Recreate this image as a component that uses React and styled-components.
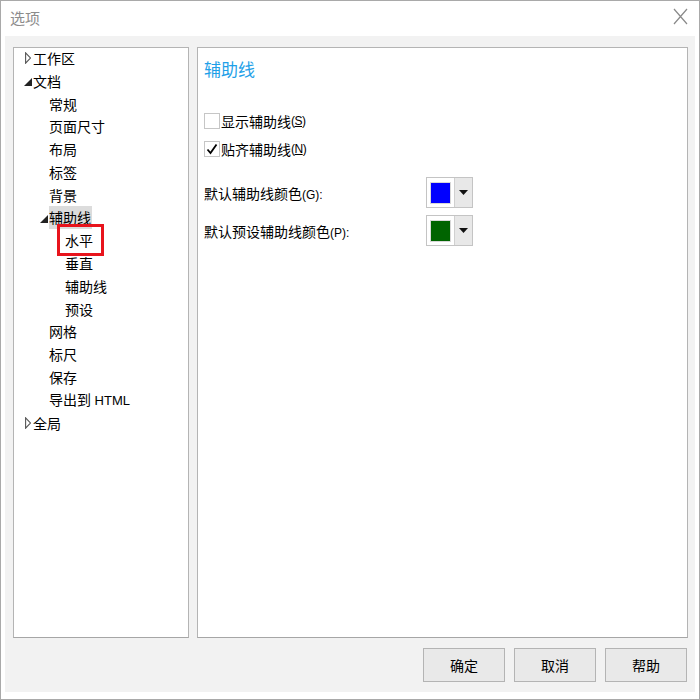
import React from 'react';
import styled, { createGlobalStyle } from 'styled-components';

const Global = createGlobalStyle`
  html, body {
    margin: 0;
    padding: 0;
    background: #ffffff;
  }
  body {
    font-family: "Liberation Sans", "Noto Sans CJK SC", sans-serif;
    color: #000;
  }
`;

const Window = styled.div`
  width: 700px;
  height: 700px;
  box-sizing: border-box;
  border: 1px solid #a9a9a9;
  background: #ffffff;
  display: flex;
  flex-direction: column;
`;
const TitleBar = styled.div`
  height: 35px;
  flex: none;
  display: flex;
  align-items: center;
  justify-content: space-between;
  padding: 0 11px 0 9px;
`;
const Title = styled.span`
  font-family: "Noto Sans CJK SC", sans-serif;
  font-size: 15px;
  color: #8c8c8c;
  margin-top: -2px;
`;
const Close = styled.svg`
  width: 15px;
  height: 17px;
  margin-top: -4px;
`;
const Body = styled.div`
  flex: 1;
  margin: 0 4px 7px;
  background: #f2f2f2;
  padding: 11px 7px 10px 8px;
  display: flex;
  flex-direction: column;
`;
const Panels = styled.div`
  flex: 1;
  display: flex;
  gap: 8px;
`;
const Panel = styled.div`
  box-sizing: border-box;
  background: #ffffff;
  border: 1px solid #b4b4b4;
  border-bottom-color: #a6a6a6;
  flex: ${(p) => (p.$width ? 'none' : '1')};
  width: ${(p) => (p.$width ? `${p.$width}px` : 'auto')};
`;
const Tree = styled.div`
  margin-top: -1px;
  font-family: "Noto Sans CJK SC", sans-serif;
  font-size: 14px;
`;
const TreeRow = styled.div`
  height: 22.8px;
  display: flex;
  align-items: center;
  padding-left: ${(p) => 5 + p.$level * 16}px;
`;
const Toggle = styled.span`
  width: 14px;
  height: 100%;
  flex: none;
  display: flex;
  align-items: center;
  padding-left: ${(p) => (p.$open ? 5 : 6)}px;
  box-sizing: border-box;
`;
const Label = styled.span`
  position: relative;
  line-height: 23px;
  padding-right: 1px;
  background: ${(p) => (p.$selected ? '#dcdcdc' : 'transparent')};
  white-space: nowrap;
  &::after {
    content: '';
    display: ${(p) => (p.$marked ? 'block' : 'none')};
    position: absolute;
    left: -8px;
    right: -10px;
    top: -5px;
    bottom: -4px;
    border: 3px solid #e8141c;
  }
`;
const Latin = styled.span`
  font-family: "Liberation Sans", sans-serif;
  font-size: ${(p) => p.$size || 13}px;
`;
const Content = styled.div`
  padding: 9px 0 0 6px;
  font-family: "Noto Sans CJK SC", sans-serif;
  font-size: 14px;
`;
const Heading = styled.div`
  color: #1e9fe8;
  font-size: 17px;
  line-height: 24px;
  margin-bottom: 30px;
`;
const CheckRow = styled.div`
  height: 20px;
  display: flex;
  align-items: center;
  margin-bottom: 8px;
`;
const Box = styled.span`
  width: 16px;
  height: 16px;
  box-sizing: border-box;
  border: 1px solid #c6c6c6;
  background: #fff;
  margin-right: 1px;
  display: flex;
  align-items: center;
  justify-content: center;
`;
const Key = styled.span`
  font-family: "Liberation Sans", sans-serif;
  font-size: 12px;
  letter-spacing: -0.5px;
  & u {
    text-decoration: underline;
  }
`;
const ColorGrid = styled.div`
  margin-top: 18px;
  display: grid;
  grid-template-columns: 222px auto;
  row-gap: 7px;
  align-items: center;
`;
const Combo = styled.div`
  width: 47px;
  height: 31px;
  box-sizing: border-box;
  border: 1px solid #c4c4c4;
  display: flex;
  background: #fff;
`;
const Swatch = styled.span`
  width: 21px;
  height: 22px;
  margin: 4px 3px 3px 3px;
  box-sizing: border-box;
  border: 1px solid #d8d8d8;
  background: ${(p) => p.$color};
`;
const Drop = styled.span`
  flex: 1;
  background: #e8e8e8;
  border-left: 1px solid #d0d0d0;
  display: flex;
  align-items: center;
  justify-content: center;
`;
const Footer = styled.div`
  margin-top: 10px;
  display: flex;
  justify-content: flex-end;
  gap: 9px;
  padding-right: 1px;
`;
const Button = styled.button`
  width: 82px;
  height: 34px;
  box-sizing: border-box;
  border: 1px solid #b4b4b4;
  background: #e9e9e9;
  font-family: "Noto Sans CJK SC", sans-serif;
  font-size: 14px;
  color: #000;
  padding: 0;
`;

const tree = [
  { label: '工作区', level: 0, toggle: 'closed' },
  { label: '文档', level: 0, toggle: 'open' },
  { label: '常规', level: 1 },
  { label: '页面尺寸', level: 1 },
  { label: '布局', level: 1 },
  { label: '标签', level: 1 },
  { label: '背景', level: 1 },
  { label: '辅助线', level: 1, toggle: 'open', selected: true },
  { label: '水平', level: 2, marked: true },
  { label: '垂直', level: 2 },
  { label: '辅助线', level: 2 },
  { label: '预设', level: 2 },
  { label: '网格', level: 1 },
  { label: '标尺', level: 1 },
  { label: '保存', level: 1 },
  { label: '导出到', latin: ' HTML', level: 1 },
  { label: '全局', level: 0, toggle: 'closed' },
];

function Arrow({ type }) {
  if (type === 'open') {
    return (
      <svg width="8" height="8" viewBox="0 0 8 8" style={{ marginTop: 2 }}>
        <path d="M8 0 L8 8 L0 8 Z" fill="#222" />
      </svg>
    );
  }
  return (
    <svg width="6" height="12" viewBox="0 0 6 12">
      <path d="M0.6 0.8 L5.4 6 L0.6 11.2 Z" fill="none" stroke="#555" strokeWidth="1.1" />
    </svg>
  );
}

function Down() {
  return (
    <svg width="9" height="5" viewBox="0 0 9 5">
      <path d="M0 0 L9 0 L4.5 5 Z" fill="#111" />
    </svg>
  );
}

export default function App() {
  return (
    <>
      <Global />
      <Window>
        <TitleBar>
          <Title>选项</Title>
          <Close viewBox="0 0 15 17">
            <path d="M1 1 L14 16 M14 1 L1 16" stroke="#8a8a8a" strokeWidth="1.2" fill="none" />
          </Close>
        </TitleBar>
        <Body>
          <Panels>
            <Panel $width={176}>
              <Tree>
                {tree.map((item, i) => (
                  <TreeRow key={i} $level={item.level}>
                    <Toggle $open={item.toggle === 'open'}>
                      {item.toggle && <Arrow type={item.toggle} />}
                    </Toggle>
                    <Label $selected={item.selected} $marked={item.marked}>
                      {item.label}
                      {item.latin && <Latin>{item.latin}</Latin>}
                    </Label>
                  </TreeRow>
                ))}
              </Tree>
            </Panel>
            <Panel>
              <Content>
                <Heading>辅助线</Heading>
                <CheckRow>
                  <Box />
                  显示辅助线<Key>(<u>S</u>)</Key>
                </CheckRow>
                <CheckRow>
                  <Box>
                    <svg width="12" height="12" viewBox="0 0 12 12">
                      <path d="M1.5 6.5 L4.5 10 L10.5 1.5" stroke="#000" strokeWidth="1.8" fill="none" />
                    </svg>
                  </Box>
                  贴齐辅助线<Key>(<u>N</u>)</Key>
                </CheckRow>
                <ColorGrid>
                  <span>默认辅助线颜色<Latin $size={12}>(G):</Latin></span>
                  <Combo>
                    <Swatch $color="#0000ff" />
                    <Drop><Down /></Drop>
                  </Combo>
                  <span>默认预设辅助线颜色<Latin $size={12}>(P):</Latin></span>
                  <Combo>
                    <Swatch $color="#006400" />
                    <Drop><Down /></Drop>
                  </Combo>
                </ColorGrid>
              </Content>
            </Panel>
          </Panels>
          <Footer>
            <Button>确定</Button>
            <Button>取消</Button>
            <Button>帮助</Button>
          </Footer>
        </Body>
      </Window>
    </>
  );
}
